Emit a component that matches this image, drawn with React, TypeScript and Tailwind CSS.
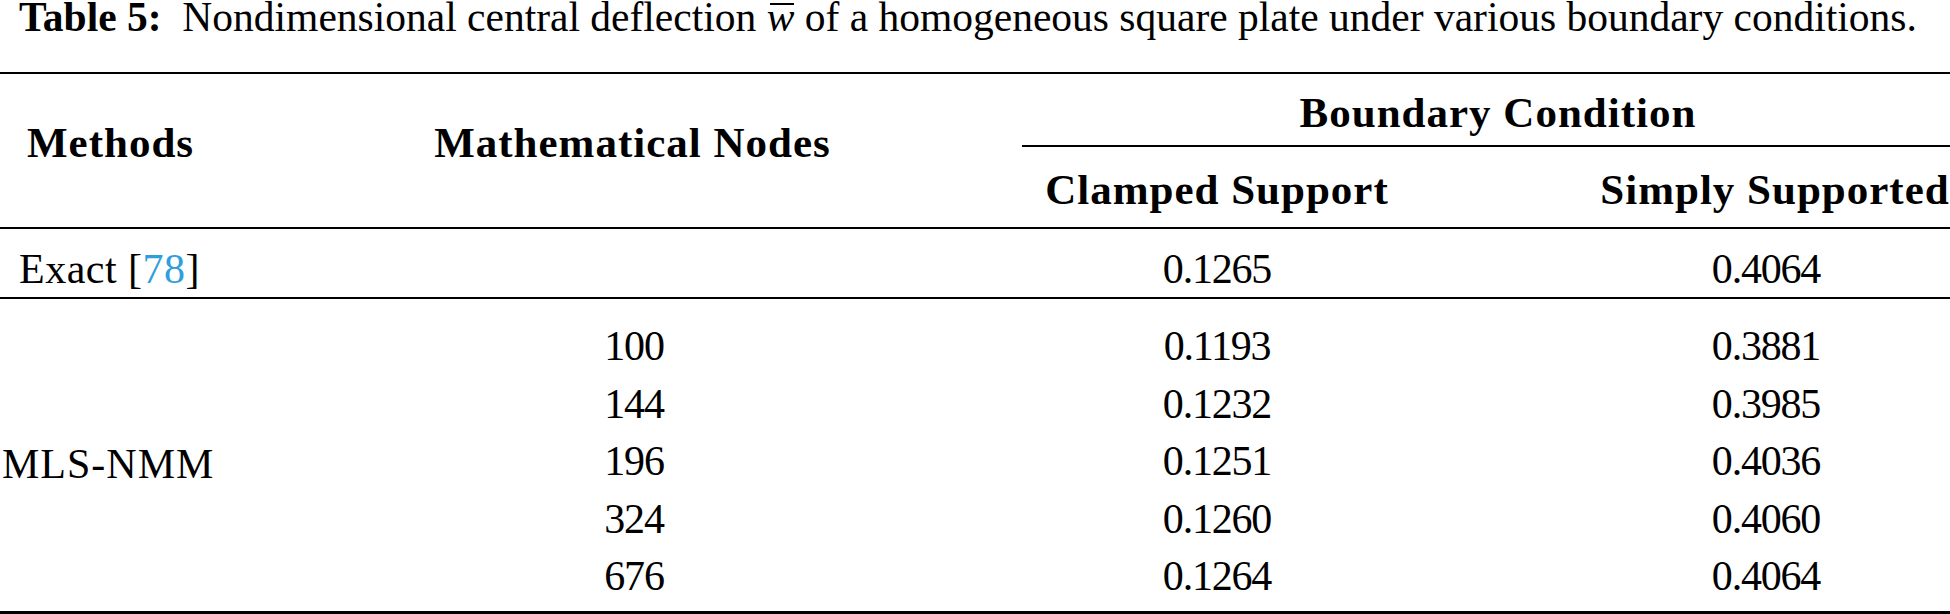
import React from "react";

const rows = [
  ["100", "0.1193", "0.3881"],
  ["144", "0.1232", "0.3985"],
  ["196", "0.1251", "0.4036"],
  ["324", "0.1260", "0.4060"],
  ["676", "0.1264", "0.4064"],
];

export default function App() {
  return (
    <div
      className="w-[1950px] h-[614px] bg-white text-black overflow-hidden text-[42px]"
      style={{ fontFamily: '"Liberation Serif", "Times New Roman", serif' }}
    >
      {/* caption */}
      <div className="h-[72px] pl-[19px] leading-[34px] whitespace-nowrap text-[41.5px]">
        <span className="font-bold">Table 5:</span>
        <span>
          {"\u00a0 "}Nondimensional central deflection{" "}
          <span className="relative italic inline-block">
            w
            <span className="absolute left-[3px] right-[0px] top-[3px] border-t-2 border-black" />
          </span>{" "}
          of a homogeneous square plate under various boundary conditions.
        </span>
      </div>
      <div className="h-[2px] bg-black" />

      {/* header */}
      <div className="flex h-[153px] font-bold text-[43px] tracking-[1px]">
        <div className="w-[243px] pl-[27px] pt-[48px] leading-[42px]">Methods</div>
        <div className="w-[779px] text-center pt-[48px] leading-[42px]">Mathematical Nodes</div>
        <div className="flex-1 flex flex-col">
          <div className="pt-[18px] leading-[42px] text-center pl-[24px]">Boundary Condition</div>
          <div className="mt-[11px] h-[2px] bg-black" />
          <div className="flex mt-[22px] leading-[42px]">
            <div className="w-[390px] text-center">Clamped Support</div>
            <div className="flex-1 text-center pl-[188px]">Simply Supported</div>
          </div>
        </div>
      </div>
      <div className="h-[2px] bg-black" />

      {/* exact row */}
      <div className="flex h-[68px] pt-[19px] leading-[42px]">
        <div className="w-[243px] pl-[19px] tracking-[0.5px]">
          Exact [<span className="text-[#2f9fdc]">78</span>]
        </div>
        <div className="w-[782px]" />
        <div className="w-[384px] text-center tracking-[-1.2px]">0.1265</div>
        <div className="flex-1 text-center pl-[173px] tracking-[-1.2px]">0.4064</div>
      </div>
      <div className="h-[2px] bg-black" />

      {/* MLS-NMM block */}
      <div className="flex h-[312px] pt-[19px]">
        <div className="w-[243px] flex items-center pb-[2px]">
          <div className="leading-[42px] pl-[2px] tracking-[1px]">MLS-NMM</div>
        </div>
        <div className="flex-1 flex flex-col tracking-[-1.2px]">
          {rows.map((r) => (
            <div key={r[0]} className="flex h-[57.5px] leading-[57.5px]">
              <div className="w-[782px] text-center">{r[0]}</div>
              <div className="w-[384px] text-center">{r[1]}</div>
              <div className="flex-1 text-center pl-[173px]">{r[2]}</div>
            </div>
          ))}
        </div>
      </div>
      <div className="h-[3px] bg-black" />
    </div>
  );
}
